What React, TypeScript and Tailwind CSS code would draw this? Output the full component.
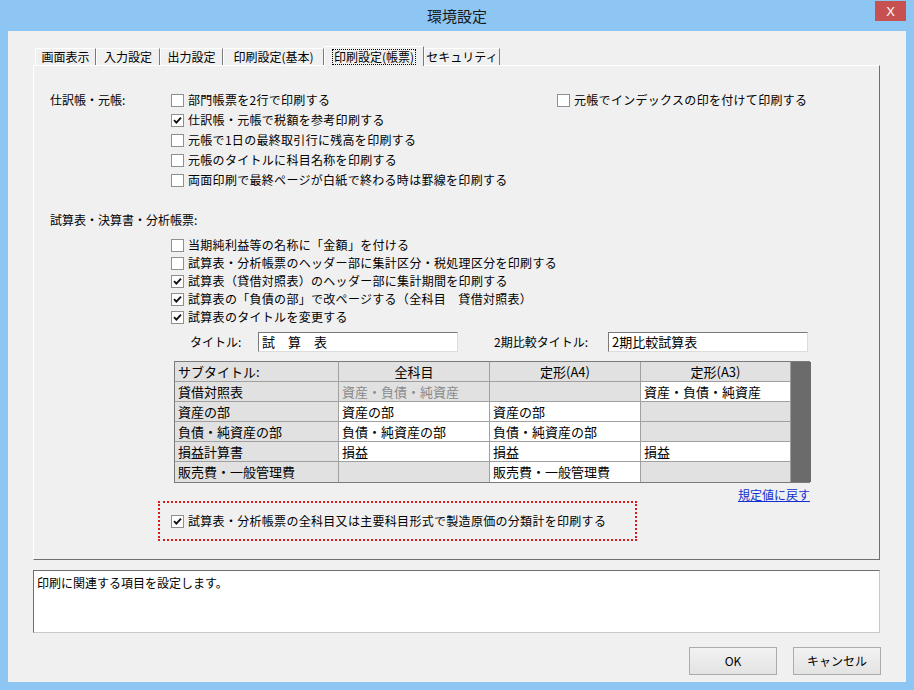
import React from "react";

type Cell = { t?: string; dis?: boolean };

const font = "font-['Noto_Sans_CJK_JP','Noto_Sans',sans-serif]";

function Box({ checked }: { checked?: boolean }) {
  return (
    <span className="flex h-[13px] w-[13px] shrink-0 items-center justify-center border border-[#8e8f8f] bg-white">
      {checked && (
        <svg width="9" height="9" viewBox="0 0 9 9">
          <path d="M1 4.2 L3.4 6.6 L8 1.6" stroke="#111" strokeWidth="1.9" fill="none" />
        </svg>
      )}
    </span>
  );
}

function CheckRow({ label, checked, h = "h-[20px]" }: { label: string; checked?: boolean; h?: string }) {
  return (
    <div className={`flex items-center gap-[4px] ${h}`}>
      <Box checked={checked} />
      <span className="whitespace-nowrap tracking-[0.3px]">{label}</span>
    </div>
  );
}

const tabs: [string, string][] = [
  ["画面表示", "w-[61px]"],
  ["入力設定", "w-[64px]"],
  ["出力設定", "w-[63px]"],
  ["印刷設定(基本)", "w-[101px]"],
  ["印刷設定(帳票)", "w-[100px]"],
  ["セキュリティ", "w-[76px]"],
];

const rows: [string, Cell, Cell, Cell][] = [
  ["貸借対照表", { t: "資産・負債・純資産", dis: true }, { dis: true }, { t: "資産・負債・純資産" }],
  ["資産の部", { t: "資産の部" }, { t: "資産の部" }, { dis: true }],
  ["負債・純資産の部", { t: "負債・純資産の部" }, { t: "負債・純資産の部" }, { dis: true }],
  ["損益計算書", { t: "損益" }, { t: "損益" }, { t: "損益" }],
  ["販売費・一般管理費", { dis: true }, { t: "販売費・一般管理費" }, { dis: true }],
];

export default function App() {
  return (
    <div className={`flex h-[690px] w-[914px] flex-col bg-[#8ec6f3] text-[12px] leading-[14px] text-black ${font}`}>
      {/* title bar */}
      <div className="relative flex h-[31px] items-center justify-center">
        <span className="text-[15px] text-[#1a1a1a]">環境設定</span>
        <div className="absolute right-[8px] top-[1px] flex h-[20px] w-[31px] items-center justify-center bg-[#c75050] text-[13px] leading-none text-white font-['Liberation_Sans',sans-serif]">
          X
        </div>
      </div>

      {/* client */}
      <div className="mx-[8px] flex h-[651px] flex-col bg-[#f0f0f0]">
        {/* tabs */}
        <div className="relative z-10 -mb-[1px] flex h-[35px] items-end pl-[27px]">
          {tabs.map(([t, w], i) =>
            i === 4 ? (
              <div
                key={t}
                className={`flex h-[20px] ${w} items-start justify-center whitespace-nowrap border-l border-t border-r border-l-white border-t-white border-r-[#7a7a7a] bg-[#f0f0f0] pt-[2px]`}
              >
                <span className="border border-dotted border-black px-[1px] text-[12px] leading-[14px]">{t}</span>
              </div>
            ) : (
              <div
                key={t}
                className={`mb-[1px] flex h-[17px] ${w} items-start justify-center whitespace-nowrap border-l border-t border-r border-l-white border-t-white border-r-[#7a7a7a] pt-[1px] text-[12px]`}
              >
                {t}
              </div>
            )
          )}
        </div>

        {/* panel */}
        <div className="ml-[25px] h-[495px] w-[847px] border border-l-white border-t-white border-r-[#6f6f6f] border-b-[#6f6f6f] pl-[16px] pt-[24px]">
          <div className="flex">
            <div className="flex h-[20px] w-[121px] items-center">仕訳帳・元帳:</div>
            <div className="flex w-[386px] flex-col">
              <CheckRow label="部門帳票を2行で印刷する" />
              <CheckRow label="仕訳帳・元帳で税額を参考印刷する" checked />
              <CheckRow label="元帳で1日の最終取引行に残高を印刷する" />
              <CheckRow label="元帳のタイトルに科目名称を印刷する" />
              <CheckRow label="両面印刷で最終ページが白紙で終わる時は罫線を印刷する" />
            </div>
            <CheckRow label="元帳でインデックスの印を付けて印刷する" />
          </div>

          <div className="mt-[20px] flex h-[20px] items-center">試算表・決算書・分析帳票:</div>
          <div className="mt-[6px] flex flex-col pl-[121px]">
            <CheckRow h="h-[18px]" label="当期純利益等の名称に「金額」を付ける" />
            <CheckRow h="h-[18px]" label="試算表・分析帳票のヘッダー部に集計区分・税処理区分を印刷する" />
            <CheckRow h="h-[18px]" label="試算表（貸借対照表）のヘッダー部に集計期間を印刷する" checked />
            <CheckRow h="h-[18px]" label="試算表の「負債の部」で改ページする（全科目　貸借対照表）" checked />
            <CheckRow h="h-[18px]" label="試算表のタイトルを変更する" checked />
          </div>

          <div className="mt-[6px] flex h-[20px] items-center pl-[140px]">
            <span className="w-[68px]">タイトル:</span>
            <div className="flex h-[20px] w-[200px] items-center border border-l-[#7a7a7a] border-t-[#7a7a7a] border-r-[#dcdcdc] border-b-[#dcdcdc] bg-white pl-[3px] text-[13px]">
              試　算　表
            </div>
            <span className="ml-[36px] w-[114px]">2期比較タイトル:</span>
            <div className="flex h-[20px] w-[200px] items-center border border-l-[#7a7a7a] border-t-[#7a7a7a] border-r-[#dcdcdc] border-b-[#dcdcdc] bg-white pl-[3px] text-[13px]">
              2期比較試算表
            </div>
          </div>

          {/* table */}
          <div className="ml-[124px] mt-[9px] grid w-[636px] grid-cols-[164px_151px_151px_150px_20px] grid-rows-[20px_20px_20px_20px_20px_20px] border border-[#7a7a7a] text-[13px]">
            <div className="flex items-center border-b border-r border-[#a0a0a0] bg-[#e1e1e1] pl-[3px]">サブタイトル:</div>
            <div className="flex items-center justify-center border-b border-r border-[#a0a0a0] bg-[#e1e1e1]">全科目</div>
            <div className="flex items-center justify-center border-b border-r border-[#a0a0a0] bg-[#e1e1e1]">定形(A4)</div>
            <div className="flex items-center justify-center border-b border-r border-[#a0a0a0] bg-[#e1e1e1]">定形(A3)</div>
            <div className="row-span-6 bg-[#6b6b6b]" />
            {rows.map(([label, ...cells], ri) => (
              <React.Fragment key={label}>
                <div className={`flex items-center border-r border-[#a0a0a0] bg-[#e1e1e1] pl-[3px] ${ri < 4 ? "border-b" : ""}`}>
                  {label}
                </div>
                {cells.map((c, ci) => (
                  <div
                    key={ci}
                    className={`flex items-center border-r border-[#a0a0a0] pl-[3px] ${ri < 4 ? "border-b" : ""} ${
                      c.dis ? "bg-[#e1e1e1] text-[#8a8a8a]" : "bg-white"
                    }`}
                  >
                    {c.t}
                  </div>
                ))}
              </React.Fragment>
            ))}
          </div>

          <div className="ml-[124px] mt-[5px] flex h-[14px] w-[636px] justify-end">
            <span className="text-[#1030d0] underline">規定値に戻す</span>
          </div>

          <div className="-mt-[1px] ml-[108px] flex h-[40px] w-[479px] items-center border-2 border-dotted border-[#dc1c1c] pl-[11px]">
            <CheckRow label="試算表・分析帳票の全科目又は主要科目形式で製造原価の分類計を印刷する" checked />
          </div>
        </div>

        {/* description */}
        <div className="ml-[25px] mt-[10px] h-[63px] w-[847px] border border-l-[#6f6f6f] border-t-[#6f6f6f] border-r-[#c8c8c8] border-b-[#c8c8c8] bg-white px-[3px] pt-[5px]">
          印刷に関連する項目を設定します。
        </div>

        {/* buttons */}
        <div className="mt-[14px] flex justify-end gap-[16px] pr-[25px]">
          <button className="h-[28px] w-[88px] border border-[#acacac] bg-gradient-to-b from-[#f2f2f2] to-[#e3e3e3]">OK</button>
          <button className="h-[28px] w-[88px] border border-[#acacac] bg-gradient-to-b from-[#f2f2f2] to-[#e3e3e3]">キャンセル</button>
        </div>
      </div>
    </div>
  );
}
